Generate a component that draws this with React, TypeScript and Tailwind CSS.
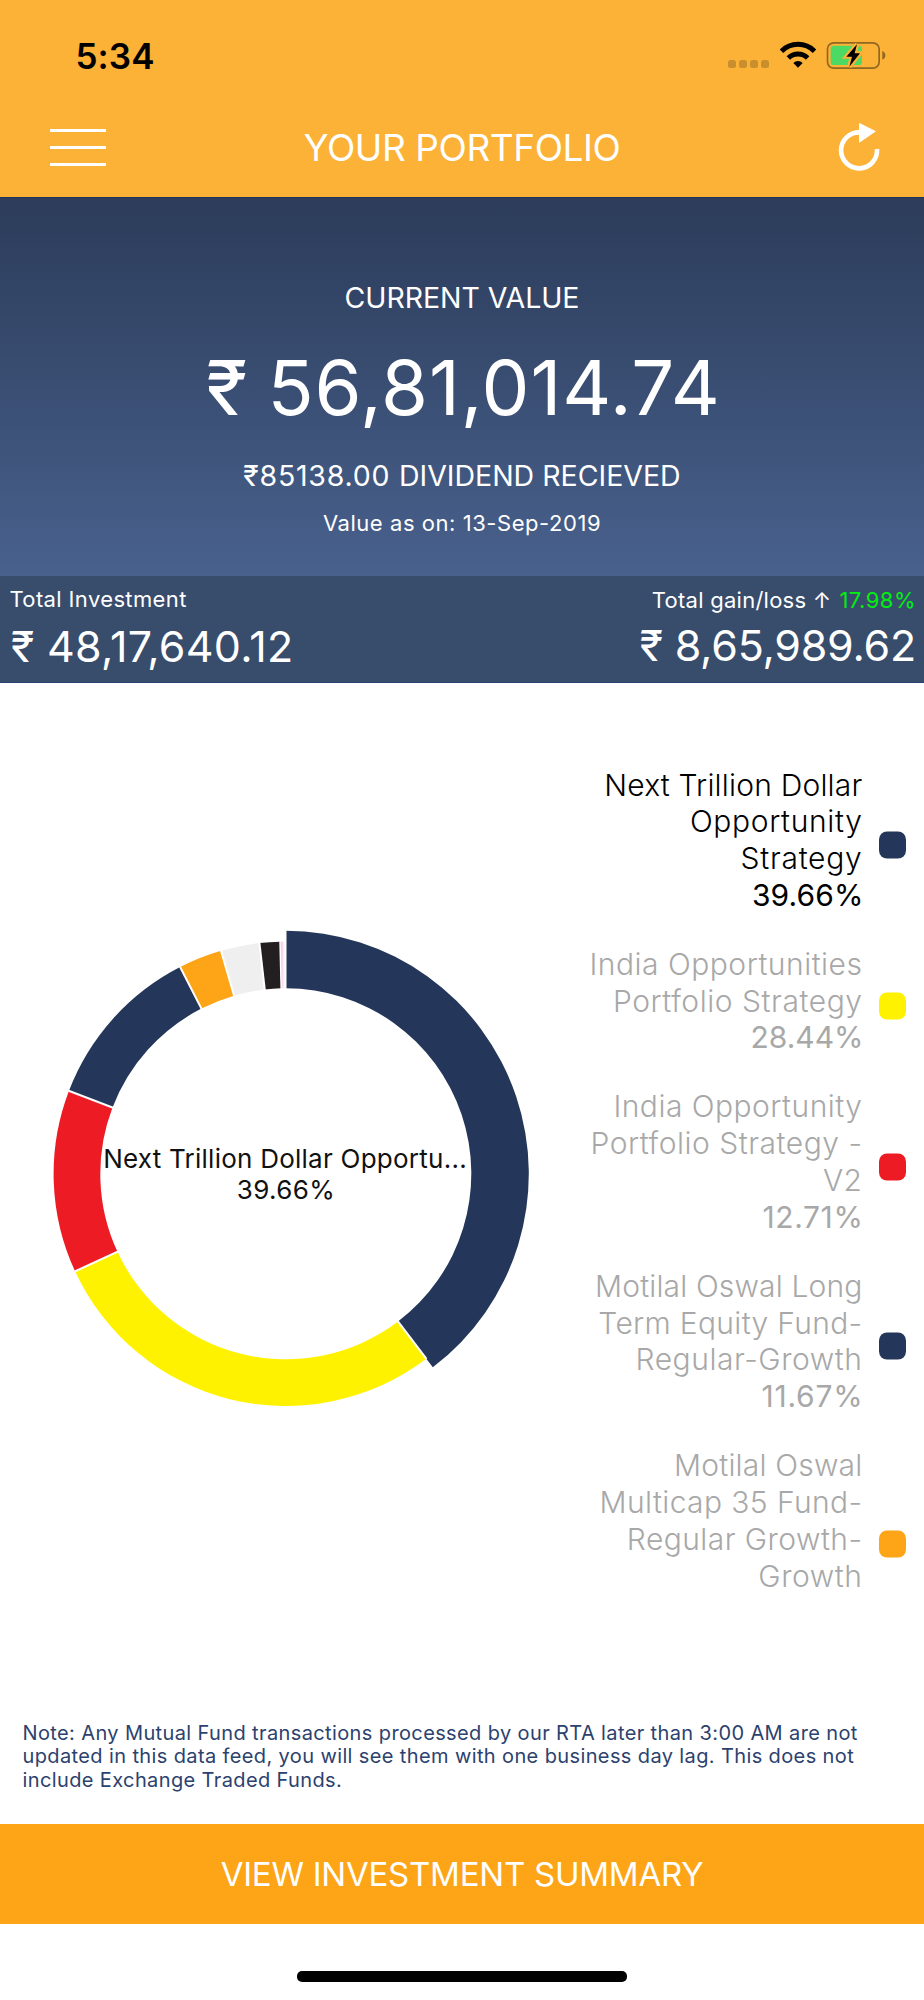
type Slice = { from: number; to: number; color: string; active?: boolean };

const slices: Slice[] = [
  { from: 0, to: 39.66, color: "#243659", active: true },
  { from: 39.66, to: 68.1, color: "#fff200" },
  { from: 68.1, to: 80.81, color: "#ed1c24" },
  { from: 80.81, to: 92.48, color: "#243659" },
  { from: 92.48, to: 95.5, color: "#fda417" },
  { from: 95.5, to: 98.19, color: "#efefef" },
  { from: 98.19, to: 99.6, color: "#231f20" },
  { from: 99.6, to: 100, color: "url(#pinkFade)" },
];

type Line = [text: string, tracking: string];
type LegendItem = { lines: Line[]; pct: Line; swatch: string; active?: boolean };

const legend: LegendItem[] = [
  {
    lines: [
      ["Next Trillion Dollar", "tracking-[0.2px]"],
      ["Opportunity", "tracking-[0.65px]"],
      ["Strategy", "tracking-[0.75px]"],
    ],
    pct: ["39.66%", "tracking-[0.1px]"],
    swatch: "bg-[#243659]",
    active: true,
  },
  {
    lines: [
      ["India Opportunities", "tracking-[0.5px]"],
      ["Portfolio Strategy", "tracking-[0.55px]"],
    ],
    pct: ["28.44%", "tracking-[0px]"],
    swatch: "bg-[#fff200]",
  },
  {
    lines: [
      ["India Opportunity", "tracking-[0.48px]"],
      ["Portfolio Strategy -", "tracking-[0.52px]"],
      ["V2", "tracking-[0.48px]"],
    ],
    pct: ["12.71%", "tracking-[0.6px]"],
    swatch: "bg-[#ed1c24]",
  },
  {
    lines: [
      ["Motilal Oswal Long", "tracking-[0.15px]"],
      ["Term Equity Fund-", "tracking-[0.32px]"],
      ["Regular-Growth", "tracking-[0.55px]"],
    ],
    pct: ["11.67%", "tracking-[0.8px]"],
    swatch: "bg-[#243659]",
  },
  {
    lines: [
      ["Motilal Oswal", "tracking-[0.2px]"],
      ["Multicap 35 Fund-", "tracking-[0.4px]"],
      ["Regular Growth-", "tracking-[0.45px]"],
      ["Growth", "tracking-[0.55px]"],
    ],
    pct: ["", "tracking-[0px]"],
    swatch: "bg-[#fda417]",
  },
];

const C = 243.8;
const INNER = 185.5;

function point(percent: number, r: number) {
  const a = (percent / 100) * Math.PI * 2;
  return `${(C + r * Math.sin(a)).toFixed(2)} ${(C - r * Math.cos(a)).toFixed(2)}`;
}

function slicePath({ from, to, active }: Slice) {
  const outer = active ? 243 : 232.2;
  return `M${point(from, outer)}A${outer} ${outer} 0 0 1 ${point(to, outer)}L${point(to, INNER)}A${INNER} ${INNER} 0 0 0 ${point(from, INNER)}Z`;
}

function Donut() {
  return (
    <div className="relative h-[488px] w-[488px]">
      <svg width="488" height="488" viewBox="0 0 488 488">
        <defs>
          <linearGradient id="pinkFade" x1="0" x2="1" y1="0" y2="0">
            <stop offset="0" stopColor="#f5b3e2" />
            <stop offset="0.85" stopColor="#ffffff" />
          </linearGradient>
        </defs>
        {slices.map((s) => (
          <path key={s.from} d={slicePath(s)} fill={s.color} />
        ))}
        {slices.map((s) => {
          const [x1, y1] = point(s.from, INNER - 2).split(" ");
          const [x2, y2] = point(s.from, s.from === 0 ? 244 : 232.5).split(" ");
          const width = s.from === 99.6 || s.from === 0 ? 1.4 : 2;
          return <line key={s.from} x1={x1} y1={y1} x2={x2} y2={y2} stroke="#fff" strokeWidth={width} />;
        })}
      </svg>
      <div className="absolute inset-0 flex flex-col items-center justify-center text-[26px] leading-[31px] text-[#111]">
        <div className="-ml-[2px] tracking-[0.245px] whitespace-nowrap">Next Trillion Dollar Opportu...</div>
        <div className="tracking-[0.38px]">39.66%</div>
      </div>
    </div>
  );
}

function StatusIcons() {
  return (
    <div className="flex h-[30px] items-start">
      <div className="mt-[19px] flex gap-[3px]">
        {[0, 1, 2, 3].map((i) => (
          <div key={i} className="h-[8px] w-[8px] rounded-[2.5px] bg-[#c98f2e]" />
        ))}
      </div>
      <svg className="ml-[10px]" width="38" height="27.33" viewBox="418 34 114 82">
        <path d="M425.5 64.5A70 70 0 0 1 524.5 64.5" fill="none" stroke="#000" strokeWidth="15" />
        <path d="M446 85A41 41 0 0 1 504 85" fill="none" stroke="#000" strokeWidth="15" />
        <path d="M461 100A20 20 0 0 1 489 100L475 114Z" />
      </svg>
      <svg className="-mt-[1px] ml-[8px]" width="62" height="30" viewBox="556 30 186 90">
        <rect x="563.5" y="38.5" width="155" height="76" rx="19" fill="none" stroke="#8f6723" strokeWidth="5" />
        <rect x="573" y="47" width="94" height="58" rx="10" fill="#4cd964" />
        <path d="M728 63C740 67 740 85 728 89Z" fill="#8f6723" />
        <path
          d="M652 43L620 80H637L629 110L661 70H645Z"
          fill="#fcb137"
          stroke="#fcb137"
          strokeWidth="13"
        />
        <path d="M652 43L620 80H637L629 110L661 70H645Z" fill="#000" />
      </svg>
    </div>
  );
}

export default function App() {
  return (
    <div className="flex h-[2000px] w-[924px] flex-col overflow-hidden bg-white font-['Inter','Liberation_Sans',sans-serif]">
      <header className="h-[197px] shrink-0 bg-[#fcb137]">
        <div className="flex h-[111px] items-center justify-between pr-[37px] pl-[75.5px]">
          <div className="text-[35px] leading-[40px] font-semibold tracking-[0.09px] text-black">5:34</div>
          <StatusIcons />
        </div>
        <div className="grid h-[73px] grid-cols-[1fr_auto_1fr] items-center pr-[44px] pl-[50px]">
          <div className="flex w-[56px] flex-col gap-[14px]">
            <div className="h-[3px] bg-white" />
            <div className="h-[3px] bg-white" />
            <div className="h-[3px] bg-white" />
          </div>
          <h1 className="mr-[6px] text-[37px] leading-[44px] font-normal tracking-[-0.42px] text-white">YOUR PORTFOLIO</h1>
          <svg className="-mt-[1px] justify-self-end" width="42" height="49.33" viewBox="595 277 126 148">
            <path d="M660 308A54 54 0 1 0 712 358" fill="none" stroke="#fff" strokeWidth="14" />
            <path d="M658 279L709 305L658 340Z" fill="#fff" />
          </svg>
        </div>
      </header>

      <section className="flex h-[379px] shrink-0 flex-col items-center border-t border-[#20335a] bg-linear-to-b from-[#2c3c5a] to-[#48618d] pt-[80px] text-white">
        <div className="text-[28.5px] leading-[40px] tracking-[-0.05px]">CURRENT VALUE</div>
        <div className="mt-[19px] pl-[3px] text-[76px] leading-[100px] tracking-[0.88px] [word-spacing:-3px]">
          ₹ 56,81,014.74
        </div>
        <div className="mt-[19px] text-[28.5px] leading-[40px]">
          <span className="tracking-[0.75px]">₹85138.00 </span>
          <span>DIVIDEND RECIEVED</span>
        </div>
        <div className="mt-[12px] text-[22px] leading-[30px] tracking-[0.55px]">Value as on: 13-Sep-2019</div>
      </section>

      <section className="flex h-[107px] shrink-0 justify-between border-b border-[#2b4372] bg-[#384c6c] pr-[8px] pl-[10px] text-white">
        <div className="pt-[9px]">
          <div className="-ml-[0.5px] text-[22px] leading-[28px] tracking-[0.37px]">Total Investment</div>
          <div className="mt-[8px] ml-[1px] text-[43px] leading-[50px] tracking-[0.32px]">₹ 48,17,640.12</div>
        </div>
        <div className="flex flex-col items-end pt-[10px]">
          <div className="flex gap-[8px] text-[22px] leading-[28px]">
            <span className="tracking-[0.26px]">Total gain/loss ↑</span>
            <span className="tracking-[0.48px] text-[#00f010]">17.98%</span>
          </div>
          <div className="mt-[6px] text-[43px] leading-[50px] tracking-[-0.22px]">₹ 8,65,989.62</div>
        </div>
      </section>

      <section className="flex h-[1039px] shrink-0 justify-between pr-[18px] pl-[42px]">
        <div className="pt-[247px]">
          <Donut />
        </div>
        <div className="flex flex-col gap-[32.2px] pt-[83.5px]">
          {legend.map(({ lines, pct, swatch, active }) => (
            <div key={lines[0][0]} className="flex items-center justify-end gap-[16.5px]">
              <div
                className={`text-right text-[30px] leading-[36.8px] whitespace-nowrap ${active ? "text-black" : "text-[#a8a8a8]"}`}
              >
                {lines.map(([text, tracking]) => (
                  <div key={text} className={`font-light ${tracking}`}>
                    {text}
                  </div>
                ))}
                <div className={`-mr-[1px] h-[36.8px] ${pct[1]}`}>{pct[0]}</div>
              </div>
              <div className={`h-[27px] w-[27px] translate-y-[4.5px] rounded-[8px] ${swatch}`} />
            </div>
          ))}
        </div>
      </section>

      <p className="h-[102px] shrink-0 pl-[22.5px] text-[20px] leading-[23.35px] tracking-[0.38px] whitespace-nowrap text-[#2c426e]">
        Note: Any Mutual Fund transactions processed by our RTA later than 3:00 AM are not
        <br />
        updated in this data feed, you will see them with one business day lag. This does not
        <br />
        include Exchange Traded Funds.
      </p>

      <button className="h-[100px] shrink-0 bg-[#fda417] pt-[2px] text-[33px] font-normal tracking-[-0.24px] text-white">
        VIEW INVESTMENT SUMMARY
      </button>
      <div className="mt-[47px] h-[11px] w-[330px] shrink-0 self-center rounded-[5px] bg-black" />
    </div>
  );
}
